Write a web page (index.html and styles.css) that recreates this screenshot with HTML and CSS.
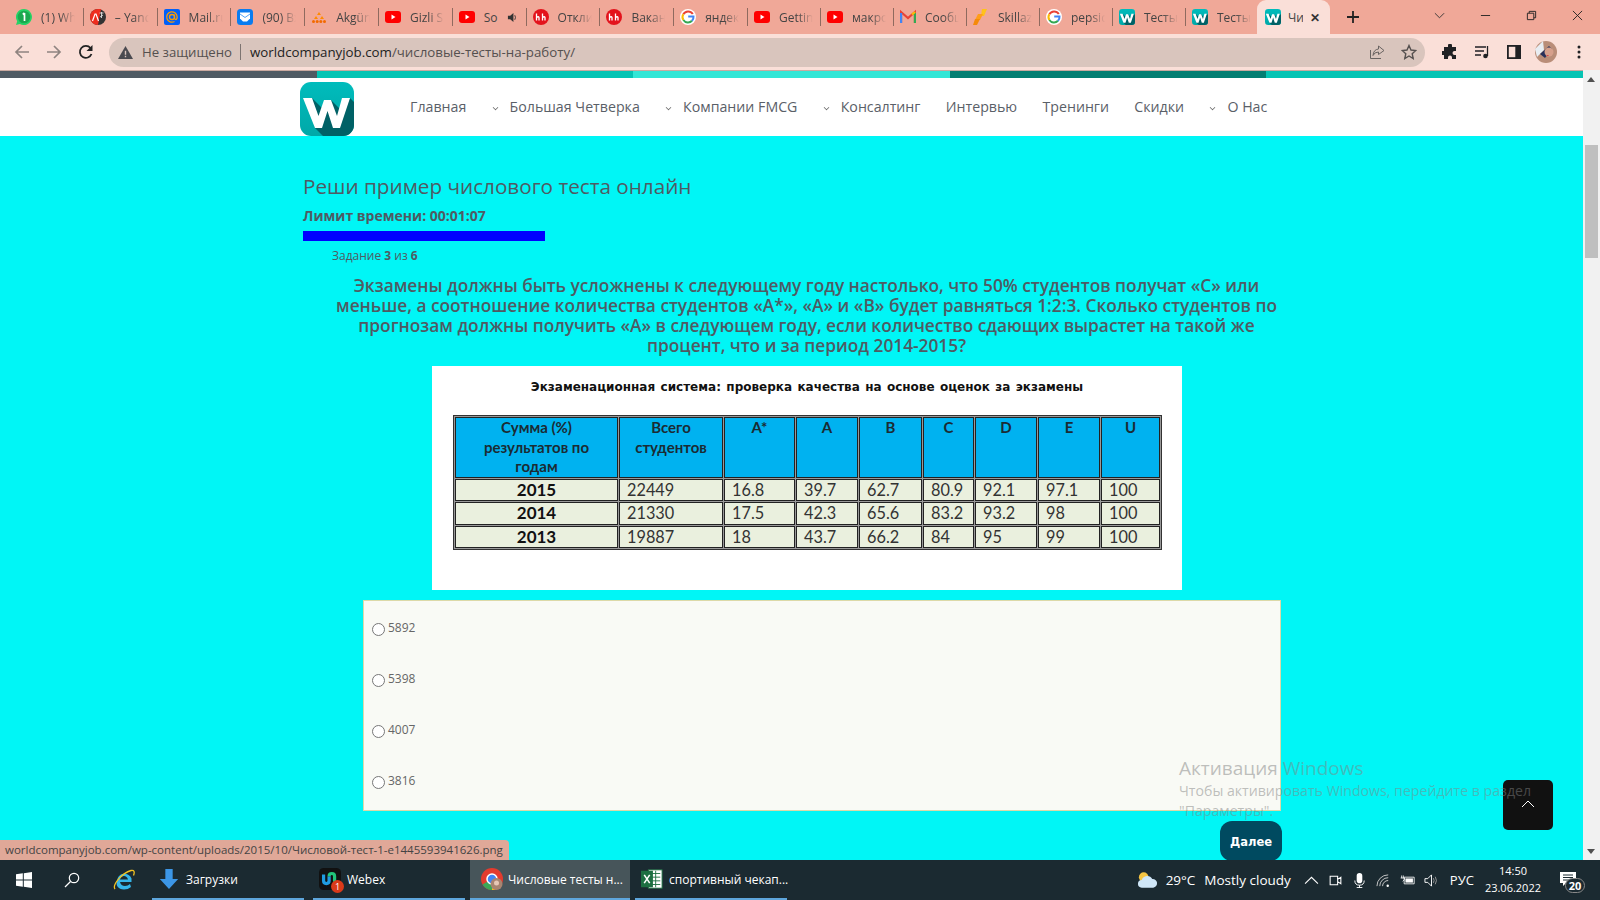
FILE: index.html
```html
<!DOCTYPE html>
<html lang="ru">
<head>
<meta charset="utf-8">
<title>Числовые тесты на работу</title>
<link rel="stylesheet" href="styles.css">
</head>
<body>
<svg class="defs" width="0" height="0" aria-hidden="true">
  <defs>
    <linearGradient id="wg" x1="0" y1="0" x2="0" y2="1"><stop offset="0" stop-color="#00bcbc"/><stop offset="1" stop-color="#00a8a8"/></linearGradient>
    <symbol id="i-w" viewBox="0 0 54 54"><rect width="54" height="54" rx="11" fill="url(#wg)"/><path d="M12 16 24 28 31 18 43 30 50 16 54 20V43A11 11 0 0 1 43 54H23L15 46Z" fill="#006166"/><path d="M3 16h9l6.500 18L24 18h7l6 16 5-18h8L40 46h-7l-5.500-17L22 46h-7z" fill="#fff"/></symbol>
    <symbol id="i-yt" viewBox="0 0 16 16"><rect y="2" width="16" height="12" rx="3" fill="#f00"/><path d="M6.500 5.500v5l4-2.500z" fill="#fff"/></symbol>
    <symbol id="i-hh" viewBox="0 0 16 16"><circle cx="8" cy="8" r="8" fill="#e3131c"/><path d="M3.500 4.500v7M3.500 8.500q2-1.500 2.500 0v3M9.500 4.500v7M9.500 8.500q2-1.500 2.500 0v3" fill="none" stroke="#fff" stroke-width="1.300"/></symbol>
    <symbol id="i-g" viewBox="0 0 16 16"><circle cx="8" cy="8" r="8" fill="#fff"/><path d="M12.800 5A5.500 5.500 0 0 0 3.300 5.300" fill="none" stroke="#ea4335" stroke-width="2"/><path d="M3.300 5.200A5.500 5.500 0 0 0 3.400 11" fill="none" stroke="#fbbc05" stroke-width="2"/><path d="M3.400 11A5.500 5.500 0 0 0 12 11.800" fill="none" stroke="#34a853" stroke-width="2"/><path d="M12 11.800A5.500 5.500 0 0 0 13.500 7.500H8.200" fill="none" stroke="#4285f4" stroke-width="2"/></symbol>
    <symbol id="i-wa" viewBox="0 0 16 16"><path d="M8 0a8 8 0 0 0-6.800 12.200L0 16l3.900-1.100A8 8 0 1 0 8 0z" fill="#25d366"/><circle cx="8" cy="8" r="6.300" fill="#1ca84f"/><path d="M8.500 4v8M6.800 5.500 8.500 4" stroke="#fff" stroke-width="1.700" fill="none"/></symbol>
    <symbol id="i-tr" viewBox="0 0 16 16"><circle cx="8" cy="8" r="8" fill="#333"/><path d="M8 0A8 8 0 0 0 8 16L11 0z" fill="#ef2d1e"/><path d="M2.500 12 5 5h1l2.500 7" fill="none" stroke="#fff" stroke-width="1.200"/><path d="M9.500 4h4M11.500 3v6M10 8l3-2" stroke="#ddd" stroke-width=".9" fill="none"/></symbol>
    <symbol id="i-mail" viewBox="0 0 16 16"><rect width="16" height="16" rx="2" fill="#005ff9"/><circle cx="8" cy="8" r="2.500" fill="none" stroke="#ff9e00" stroke-width="1.300"/><path d="M10.500 5.500v3.500q0 1.500 1.300 1.500t1.300-2.500A5.200 5.200 0 1 0 10.500 12.500" fill="none" stroke="#ff9e00" stroke-width="1.300"/></symbol>
    <symbol id="i-msg" viewBox="0 0 16 16"><rect width="16" height="16" rx="3.500" fill="#0a7cf0"/><path d="M3 3.500h10v6l-3 3H6l-3-3z" fill="#fff"/><path d="M3 5l5 3.500L13 5" fill="none" stroke="#0a7cf0" stroke-width=".7"/></symbol>
    <symbol id="i-ak" viewBox="0 0 16 16"><path d="M8 3l2 3H6zM5 7l2 3H3zM11 7l2 3H9z" fill="#ff8a00"/><circle cx="2.500" cy="12.500" r="1.500" fill="#f26a00"/><circle cx="6.200" cy="12.500" r="1.500" fill="#f26a00"/><circle cx="9.800" cy="12.500" r="1.500" fill="#f26a00"/><circle cx="13.500" cy="12.500" r="1.500" fill="#f26a00"/></symbol>
    <symbol id="i-gm" viewBox="0 0 16 16"><path d="M1 14V3l7 6 7-6v11" fill="none" stroke="#ea4335" stroke-width="2.200"/><path d="M1 14V4" stroke="#4285f4" stroke-width="2.400"/><path d="M15 14V4" stroke="#34a853" stroke-width="2.400"/><path d="M12 5.500 15 3" stroke="#fbbc05" stroke-width="2.200"/></symbol>
    <symbol id="i-sk" viewBox="0 0 16 16"><path d="M9 0h5l-3 7H8z" fill="#ffc21a"/><path d="M5 5h5l-3 6H2z" fill="#ff9d1a"/><path d="M2 10h5l-3 6H0z" fill="#f58a0a"/></symbol>
  </defs>
</svg>

<div class="screen">
  <div class="tabbar">
    <div class="tab"><svg class="tab-ico"><use href="#i-wa"/></svg><span class="tab-t">(1) WhatsApp</span></div>
    <div class="tab"><svg class="tab-ico"><use href="#i-tr"/></svg><span class="tab-t">– Yandex</span></div>
    <div class="tab"><svg class="tab-ico"><use href="#i-mail"/></svg><span class="tab-t">Mail.ru</span></div>
    <div class="tab"><svg class="tab-ico"><use href="#i-msg"/></svg><span class="tab-t">(90) Входящие</span></div>
    <div class="tab"><svg class="tab-ico"><use href="#i-ak"/></svg><span class="tab-t">Akgün</span></div>
    <div class="tab"><svg class="tab-ico"><use href="#i-yt"/></svg><span class="tab-t">Gizli Sır</span></div>
    <div class="tab"><svg class="tab-ico"><use href="#i-yt"/></svg><span class="tab-t tab-short">So</span><svg class="tab-snd" viewBox="0 0 12 12"><path d="M1 4h2.500L7 1v10L3.500 8H1z" fill="#333"/><path d="M8.500 3.500q1.500 2.500 0 5" fill="none" stroke="#333"/></svg></div>
    <div class="tab"><svg class="tab-ico"><use href="#i-hh"/></svg><span class="tab-t">Отклики</span></div>
    <div class="tab"><svg class="tab-ico"><use href="#i-hh"/></svg><span class="tab-t">Вакансии</span></div>
    <div class="tab"><svg class="tab-ico"><use href="#i-g"/></svg><span class="tab-t">яндекс</span></div>
    <div class="tab"><svg class="tab-ico"><use href="#i-yt"/></svg><span class="tab-t">Getting</span></div>
    <div class="tab"><svg class="tab-ico"><use href="#i-yt"/></svg><span class="tab-t">макрос</span></div>
    <div class="tab"><svg class="tab-ico"><use href="#i-gm"/></svg><span class="tab-t">Сообщения</span></div>
    <div class="tab"><svg class="tab-ico"><use href="#i-sk"/></svg><span class="tab-t">Skillaz</span></div>
    <div class="tab"><svg class="tab-ico"><use href="#i-g"/></svg><span class="tab-t">pepsico</span></div>
    <div class="tab"><svg class="tab-ico"><use href="#i-w"/></svg><span class="tab-t">Тесты</span></div>
    <div class="tab"><svg class="tab-ico"><use href="#i-w"/></svg><span class="tab-t">Тесты</span></div>
    <div class="tab tab-active"><svg class="tab-ico"><use href="#i-w"/></svg><span class="tab-t tab-short">Чи</span><span class="tab-x">✕</span></div>
    <svg class="newtab" viewBox="0 0 14 14"><path d="M7 1v12M1 7h12" stroke="#222" stroke-width="1.800"/></svg>
    <div class="winbtns">
      <svg class="win" viewBox="0 0 12 12"><path d="M1 3.500 6 8.500l5-5" fill="none" stroke="#333"/></svg>
      <svg class="win" viewBox="0 0 12 12"><path d="M1 6h10" stroke="#222"/></svg>
      <svg class="win" viewBox="0 0 12 12"><path d="M1.500 3.500h7v7h-7zM3.500 3.500v-2h7v7h-2" fill="none" stroke="#222"/></svg>
      <svg class="win" viewBox="0 0 12 12"><path d="M1 1l10 10M11 1 1 11" stroke="#222"/></svg>
    </div>
  </div>

  <div class="toolbar">
    <svg class="tb-ico nav-first" viewBox="0 0 16 16"><path d="M15 8H2M8 2 2 8l6 6" fill="none" stroke="#8f8480" stroke-width="1.700"/></svg>
    <svg class="tb-ico" viewBox="0 0 16 16"><path d="M1 8h13M8 2l6 6-6 6" fill="none" stroke="#8f8480" stroke-width="1.700"/></svg>
    <svg class="tb-ico" viewBox="0 0 16 16"><path d="M13.500 10A6 6 0 1 1 12.500 4" fill="none" stroke="#222" stroke-width="1.800"/><path d="M14.500 1v6h-6z" fill="#222"/></svg>
    <div class="omnibox">
      <svg class="warn" viewBox="0 0 16 16"><path d="M8 1 16 15H0z" fill="#4a4a50"/><path d="M8 6v4.500M8 11.500v1.500" stroke="#d9c5bd" stroke-width="1.500"/></svg>
      <span class="insecure">Не защищено</span>
      <span class="omni-sep"></span>
      <span class="url">worldcompanyjob.com<span class="url-path">/числовые-тесты-на-работу/</span></span>
      <svg class="omni-ico omni-share" viewBox="0 0 16 16"><path d="M9.500 2 15 6.500 9.500 10.500V8Q5.500 8 4 11.500 4.500 5.500 9.500 5z" fill="none" stroke="#6a6462"/><path d="M1.500 6v8.500H12" fill="none" stroke="#6a6462"/></svg>
      <svg class="omni-ico omni-star" viewBox="0 0 16 16"><path d="M8 1.500l2 4.500 4.800.5-3.600 3.200 1 4.800L8 12l-4.200 2.500 1-4.800L1.200 6.500 6 6z" fill="none" stroke="#55504f" stroke-width="1.400"/></svg>
    </div>
    <svg class="tb-ico ext" viewBox="0 0 16 16"><path d="M6 1.500a2 2 0 0 1 4 0V3h4v4h-1.500a2 2 0 0 0 0 4H14v4h-4v-1.500a2 2 0 0 0-4 0V15H2v-4H.8a2 2 0 0 1 0-4H2V3h4z" fill="#202124"/></svg>
    <svg class="tb-ico ext" viewBox="0 0 16 16"><path d="M1 3h11M1 7h9M1 11h6" stroke="#202124" stroke-width="1.300"/><path d="M13.500 2v10" stroke="#202124" stroke-width="1.300"/><circle cx="11.500" cy="12" r="2.300" fill="#202124"/></svg>
    <svg class="tb-ico ext" viewBox="0 0 16 16"><path d="M1 1h14v14H1z" fill="#202124"/><path d="M2.800 2.800h6.500v10.400H2.800z" fill="#fadfd8"/></svg>
    <svg class="tb-ico ext" viewBox="0 0 22 22"><circle cx="11" cy="11" r="11" fill="#b98d78"/><path d="M0 8 8 0 9 9 2 16z" fill="#e8edf2"/><path d="M5 13 14 5l3 3-7 9z" fill="#27305a"/><circle cx="14" cy="11" r="4.500" fill="#d6a08c"/><path d="M11 15q2-1.500 3 0z" fill="#d21f2c"/></svg>
    <svg class="tb-ico ext" viewBox="0 0 16 16"><circle cx="8" cy="3" r="1.500" fill="#202124"/><circle cx="8" cy="8" r="1.500" fill="#202124"/><circle cx="8" cy="13" r="1.500" fill="#202124"/></svg>
  </div>

  <div class="viewport">
    <div class="page">
      <div class="strip"><span class="s1"></span><span class="s2"></span><span class="s3"></span><span class="s4"></span><span class="s2"></span></div>
      <header class="site-head">
        <svg class="logo"><use href="#i-w"/></svg>
        <nav class="menu">
          <a>Главная</a>
          <a class="has-sub">Большая Четверка</a>
          <a class="has-sub">Компании FMCG</a>
          <a class="has-sub">Консалтинг</a>
          <a>Интервью</a>
          <a>Тренинги</a>
          <a>Скидки</a>
          <a class="has-sub">О Нас</a>
        </nav>
      </header>
      <main class="content">
        <h1 class="title">Реши пример числового теста онлайн</h1>
        <p class="timer">Лимит времени: 00:01:07</p>
        <div class="bar"></div>
        <p class="counter">Задание <b>3</b> из <b>6</b></p>
        <p class="question">Экзамены должны быть усложнены к следующему году настолько, что 50% студентов получат «С» или меньше, а соотношение количества студентов «А*», «А» и «В» будет равняться 1:2:3. Сколько студентов по прогнозам должны получить «А» в следующем году, если количество сдающих вырастет на такой же процент, что и за период 2014-2015?</p>
        <figure class="figure">
          <figcaption class="fig-title">Экзаменационная система: проверка качества на основе оценок за экзамены</figcaption>
          <table class="exam">
            <colgroup><col class="c1"><col class="c2"><col class="c3"><col class="c4"><col class="c5"><col class="c6"><col class="c7"><col class="c8"><col class="c9"></colgroup>
            <thead><tr><th>Сумма (%) результатов по годам</th><th>Всего студентов</th><th>А*</th><th>А</th><th>В</th><th>С</th><th>D</th><th>Е</th><th>U</th></tr></thead>
            <tbody>
              <tr><td class="yr">2015</td><td>22449</td><td>16.8</td><td>39.7</td><td>62.7</td><td>80.9</td><td>92.1</td><td>97.1</td><td>100</td></tr>
              <tr><td class="yr">2014</td><td>21330</td><td>17.5</td><td>42.3</td><td>65.6</td><td>83.2</td><td>93.2</td><td>98</td><td>100</td></tr>
              <tr><td class="yr">2013</td><td>19887</td><td>18</td><td>43.7</td><td>66.2</td><td>84</td><td>95</td><td>99</td><td>100</td></tr>
            </tbody>
          </table>
        </figure>
        <form class="answers">
          <label class="answer"><input type="radio" name="a"><span>5892</span></label>
          <label class="answer"><input type="radio" name="a"><span>5398</span></label>
          <label class="answer"><input type="radio" name="a"><span>4007</span></label>
          <label class="answer"><input type="radio" name="a"><span>3816</span></label>
        </form>
        <button class="next" type="button">Далее</button>
      </main>
    </div>
    <div class="scrollbar">
      <svg class="sb-arrow" viewBox="0 0 8 5"><path d="M4 0 8 5H0z" fill="#505050"/></svg>
      <div class="sb-thumb"></div>
      <svg class="sb-arrow sb-down" viewBox="0 0 8 5"><path d="M0 0h8L4 5z" fill="#505050"/></svg>
    </div>
    <a class="to-top"><svg viewBox="0 0 14 8"><path d="M1 7l6-6 6 6" fill="none" stroke="#fff"/></svg></a>
    <div class="activation">
      <div class="act-1">Активация Windows</div>
      <div class="act-2">Чтобы активировать Windows, перейдите в раздел "Параметры".</div>
    </div>
    <div class="status">worldcompanyjob.com/wp-content/uploads/2015/10/Числовой-тест-1-е1445593941626.png</div>
  </div>

  <div class="taskbar">
    <svg class="tk-win" viewBox="0 0 16 16"><path d="M0 2.300 6.800 1.300V7.500H0zM7.800 1.200 16 0V7.500H7.800zM0 8.500H6.800V14.700L0 13.700zM7.800 8.500H16V16L7.800 14.800z" fill="#fff"/></svg>
    <svg class="tk-search" viewBox="0 0 16 16"><circle cx="10" cy="6" r="4.700" fill="none" stroke="#fff" stroke-width="1.200"/><path d="M6.500 9.500 1 15" stroke="#fff" stroke-width="1.300"/></svg>
    <svg class="tk-ie" viewBox="0 0 24 24"><path d="M5 13a7.500 7.500 0 0 1 14.500-2.500V14H8q1 4 5 4 3 0 5-2l1 3q-3 2.500-7 2.500C6 21.500 3.500 17 5 13z" fill="#35b6ea"/><path d="M8 11.500h8q-1-3.500-4-3.500t-4 3.500z" fill="#1b2a31"/><path d="M3 21C0 17 10 5 19 2.500c3-.8 4 1 2.500 5" fill="none" stroke="#f3c321" stroke-width="1.300"/></svg>
    <div class="task task-first"><svg class="tk-app" viewBox="0 0 20 24"><path d="M6 1h8v11h6L10 23 0 12h6z" fill="#3c96e6"/></svg><span>Загрузки</span></div>
    <div class="task"><span class="webex"><svg class="tk-app" viewBox="0 0 24 24"><rect width="24" height="24" rx="5" fill="#111"/><path d="M5 7v7q0 3 3 3t3-3V9" fill="none" stroke="#1f9be0" stroke-width="3.500"/><path d="M11 9q0-3 3-3t3 3v6" fill="none" stroke="#21c47a" stroke-width="3.500"/></svg><span class="badge">1</span></span><span>Webex</span></div>
    <div class="task task-active"><span class="webex"><svg class="tk-app" viewBox="0 0 22 22"><circle cx="11" cy="11" r="11" fill="#e33b2e"/><path d="M11 11 1.500 16.500A11 11 0 0 0 11 22z" fill="#3aa757"/><path d="M11 11 20.500 16.500A11 11 0 0 1 11 22z" fill="#fbc116"/><circle cx="11" cy="11" r="5" fill="#4285f4" stroke="#fff" stroke-width="1.500"/><circle cx="15.500" cy="16" r="6" fill="#a98470"/><circle cx="15.500" cy="15" r="2.500" fill="#e6c7b5"/></svg></span><span>Числовые тесты н...</span></div>
    <div class="task"><svg class="tk-app" viewBox="0 0 24 24"><rect x="8" y="2" width="15" height="20" fill="#fff" stroke="#1d6f42"/><path d="M12 6h9M12 10h9M12 14h9M12 18h9M16 3v18" stroke="#1d6f42"/><rect y="3" width="13" height="18" fill="#1d6f42"/><path d="M3.500 7.500l6 9M9.500 7.500l-6 9" stroke="#fff" stroke-width="1.700"/></svg><span>спортивный чекап...</span></div>
    <div class="tray">
      <svg class="weather" viewBox="0 0 22 18"><circle cx="7" cy="6" r="5" fill="#f5c542"/><path d="M5 17a4 4 0 0 1 0-8 6 6 0 0 1 11-1 4.500 4.500 0 0 1 1 9z" fill="#cfe6f7"/></svg>
      <span class="temp">29°C</span>
      <span class="cond">Mostly cloudy</span>
      <svg class="tr-ico tr-chev" viewBox="0 0 14 14"><path d="M1 10l6-6 6 6" fill="none" stroke="#fff"/></svg>
      <svg class="tr-ico" viewBox="0 0 14 14"><path d="M2 3h7v8H2zM9 6l3-2v6l-3-2" fill="none" stroke="#fff"/></svg>
      <svg class="tr-ico" viewBox="0 0 14 16"><rect x="4" width="6" height="11" rx="3" fill="#fff"/><path d="M2 8q0 5 5 5t5-5M7 13v3M4 15.500h6" fill="none" stroke="#fff"/></svg>
      <svg class="tr-ico" viewBox="0 0 16 14"><path d="M1 13A12 12 0 0 1 13 1M4 13A9 9 0 0 1 13 4M7 13a6 6 0 0 1 6-6" fill="none" stroke="#ccc"/><circle cx="12.500" cy="12.500" r="1.300" fill="#fff"/></svg>
      <svg class="tr-ico" viewBox="0 0 18 14"><path d="M5 3h12v8H5z" fill="none" stroke="#fff"/><path d="M6.500 4.500h9v5h-9z" fill="#fff"/><path d="M2 1v3M4 1v3M.8 4h4.500v2l-2 2" fill="none" stroke="#fff"/></svg>
      <svg class="tr-ico" viewBox="0 0 16 14"><path d="M1 5h3l4-4v12L4 9H1z" fill="none" stroke="#fff"/><path d="M10 4.500q1.500 2.500 0 5M12 3q2.500 4 0 8" fill="none" stroke="#999"/></svg>
      <span class="lang">РУС</span>
      <span class="clock"><span>14:50</span><span>23.06.2022</span></span>
      <span class="notif"><svg viewBox="0 0 16 14"><path d="M0 0h16v11H6l-3 3v-3H0z" fill="#fff"/><path d="M3 3h10M3 5.500h10M3 8h7" stroke="#1b2a31"/></svg><span class="notif-n">20</span></span>
    </div>
  </div>
</div>
</body>
</html>
```

FILE: styles.css
```css
* { box-sizing: border-box; }
html, body { margin: 0; padding: 0; height: 100%; overflow: hidden; }
body { font-family: "Open Sans", "Noto Sans", sans-serif; }
.defs { position: absolute; }
.screen { width: 1600px; height: 900px; display: flex; flex-direction: column; overflow: hidden; }

/* tabs */
.tabbar { height: 34px; background: #f0a898; display: flex; align-items: stretch; padding-left: 10px; flex: none; }
.tab { width: 73.800px; height: 34px; display: flex; align-items: center; padding-left: 6px; gap: 9px; position: relative; flex: none; }
.tab:nth-child(n+11) { width: 73px; }
.tab::after { content: ""; position: absolute; right: 0; top: 8px; height: 18px; width: 1px; background: #8f6a5f; }
.tab-ico { width: 16px; height: 16px; flex: none; }
.tab-t { font-size: 12px; color: #444; white-space: nowrap; overflow: hidden; width: 34px; flex: none; -webkit-mask-image: linear-gradient(90deg, #000 55%, transparent 100%); mask-image: linear-gradient(90deg, #000 55%, transparent 100%); }
.tab-t.tab-short { width: 15px; -webkit-mask-image: none; mask-image: none; }
.tab-snd { width: 11px; height: 11px; margin-left: -1px; }
.tab-active { background: #fadfd8; border-radius: 9px 9px 0 0; margin-left: -2px; padding-left: 8px; gap: 7px; }
.tab-active::after { display: none; }
.tab-x { font-size: 12px; font-weight: 700; color: #333; }
.newtab { width: 14px; height: 14px; margin: 10px 0 0 16px; flex: none; }
.winbtns { margin-left: auto; display: flex; align-items: center; height: 30px; }
.win { width: 11px; height: 11px; margin-right: 35px; }
.win:last-child { margin-right: 17px; }

/* toolbar */
.toolbar { height: 36px; background: #fadfd8; display: flex; align-items: center; flex: none; }
.tb-ico { width: 16px; height: 16px; margin-left: 16px; flex: none; }
.nav-first { margin-left: 14px; }
.omnibox { width: 1316px; height: 29px; margin-left: 15px; background: #d9c5bd; border-radius: 15px; display: flex; align-items: center; padding-left: 9px; }
.warn { width: 15px; height: 15px; flex: none; }
.insecure { font-size: 13.200px; color: #55504f; margin-left: 9px; }
.omni-sep { width: 1px; height: 16px; background: #7d7471; margin: 0 9px 0 8px; }
.url { font-size: 13.300px; color: #222; white-space: nowrap; }
.url-path { color: #55504f; }
.omni-ico { width: 16px; height: 16px; flex: none; margin-left: 16px; }
.omni-share { margin-left: auto; }
.omni-star { margin-right: 8px; }
.ext { margin-left: 16px; }
.omnibox + .ext { margin-left: 17px; }
.toolbar .ext:nth-last-child(2) { width: 22px; height: 22px; margin-left: 13px; }
.toolbar .ext:last-child { margin-left: 14px; }

/* viewport */
.viewport { flex: 1; display: flex; position: relative; overflow: hidden; min-height: 0; }
.page { flex: 1; background: #00f6f6; overflow: hidden; border-top: 1px solid #c9a9a0; min-width: 0; }
.strip { display: flex; height: 7px; }
.strip span { flex: 1; }
.s1 { background: #4f5a63; }
.s2 { background: #06c4b4; }
.s3 { background: #33e6d6; }
.s4 { background: #047e72; }
.site-head { background: #fff; height: 58px; display: flex; padding: 4px 0 0 300px; }
.logo { width: 54px; height: 54px; flex: none; }
.menu { display: flex; align-items: flex-start; margin-left: 56px; padding-top: 15px; font-size: 14.200px; color: #5a6068; white-space: nowrap; gap: 25.300px; }
.has-sub { position: relative; margin-left: 18px; }
.has-sub::before { content: ""; position: absolute; left: -17px; top: 8px; width: 4px; height: 4px; border-right: 1px solid #666; border-bottom: 1px solid #666; transform: rotate(45deg) scale(.8); }

.content { padding: 0 0 0 302px; color: #4f5a63; }
.title { font-size: 20.700px; font-weight: 400; line-height: 28px; margin: 0 0 0 1px; padding-top: 36px; }
.timer { font-size: 14px; font-weight: 700; line-height: 20px; margin: 6px 0 0 1px; }
.bar { width: 242px; height: 10px; background: #0000ff; margin: 5px 0 0 1px; }
.counter { font-size: 12px; line-height: 16px; margin: 7px 0 0 30px; }
.question { width: 945px; margin: 12px 0 0 32px; font-size: 17.300px; font-weight: 600; line-height: 20px; text-align: center; }
.figure { width: 750px; height: 224px; margin: 10px 0 0 130px; background: #fff; padding: 13px 0 0 21px; }
.fig-title { width: 708px; font-family: "DejaVu Sans", sans-serif; font-size: 12px; font-weight: 700; color: #111; text-align: center; line-height: 16px; white-space: nowrap; word-spacing: 1.200px; }
.exam { width: 709px; margin-top: 20px; table-layout: fixed; border-collapse: separate; border-spacing: 1px; border: 1px solid #333; background: #999; font-family: Lato, sans-serif; color: #222; }
.exam th, .exam td { border: 1px solid #222; padding: 0; }
.exam th { height: 59px; background: #00b2f0; font-size: 15px; font-weight: 700; line-height: 19.500px; vertical-align: top; text-align: center; padding: 0 14px; color: #1b2b33; }
.exam td { height: 22.500px; background: #eaf0de; font-size: 16.300px; line-height: 20px; padding-left: 7px; color: #333; }
.exam .yr { text-align: center; font-size: 17px; font-weight: 700; color: #111; padding-left: 0; }
.c1 { width: 163px; } .c2 { width: 104px; } .c3 { width: 71px; } .c4 { width: 62px; } .c5 { width: 63px; }
.c6 { width: 51px; } .c7 { width: 62px; } .c8 { width: 62px; } .c9 { width: 59px; }
.answers { width: 918px; height: 211px; margin: 10px 0 0 61px; background: #f9faf5; border: 1px solid #dcd9a8; padding-top: 1px; }
.answer { display: flex; align-items: center; height: 51px; padding-left: 8px; font-size: 12px; color: #666; }
.answer input { width: 13px; height: 13px; margin: 3px 3px 0 0; }
.answer span { margin-top: -1px; }
.next { display: block; width: 62px; height: 40px; margin: 10px 0 0 918px; border: 0; border-radius: 12px; background: #004a60; color: #fff; font-family: "DejaVu Sans", sans-serif; font-weight: 700; font-size: 11.500px; padding: 1px 0 0; }

/* scrollbar */
.scrollbar { width: 17px; background: #f1f1f1; position: relative; flex: none; }
.sb-arrow { position: absolute; left: 4px; top: 7px; width: 8px; height: 5px; display: block; }
.sb-down { top: auto; bottom: 6px; }
.sb-thumb { position: absolute; left: 2px; top: 75px; width: 13px; height: 113px; background: #bfbfbf; }

/* overlays */
.to-top { position: absolute; left: 1503px; top: 710px; width: 50px; height: 50px; border-radius: 5px; background: #111; display: flex; justify-content: center; padding-top: 20px; }
.to-top svg { width: 14px; height: 8px; }
.activation { position: absolute; left: 1179px; top: 685px; width: 370px; color: rgba(130,130,130,.5); }
.act-1 { font-size: 19px; line-height: 26px; }
.act-2 { font-size: 14.150px; line-height: 20px; }
.status { position: absolute; left: 0; bottom: 0; height: 20px; padding: 0 6px 0 5px; background: #e0a898; border-radius: 0 4px 0 0; font-size: 11.500px; line-height: 20px; color: #444; white-space: nowrap; }

/* taskbar */
.taskbar { height: 40px; background: #1b2a31; display: flex; align-items: center; color: #fff; flex: none; font-size: 12px; }
.tk-win { width: 16px; height: 16px; margin-left: 16px; flex: none; }
.tk-search { width: 16px; height: 16px; margin-left: 32px; flex: none; }
.tk-ie { width: 24px; height: 24px; margin-left: 32px; flex: none; }
.task { width: 152px; height: 40px; display: flex; align-items: center; gap: 6px; padding-left: 6px; border-bottom: 2px solid #5ea6dc; margin-left: 9px; flex: none; white-space: nowrap; }
.task-first { margin-left: 16px; }
.task-active { width: 160px; margin-left: 5px; background: #47555a; padding-left: 11px; gap: 5px; }
.task-active + .task { margin-left: 5px; }
.tk-app { width: 22px; height: 22px; flex: none; display: block; }
.webex { position: relative; display: block; flex: none; }
.badge { position: absolute; right: -3px; bottom: -3px; width: 13px; height: 13px; border-radius: 50%; background: #d93a1a; color: #fff; font-size: 9px; line-height: 13px; text-align: center; }
.tray { margin-left: auto; display: flex; align-items: center; height: 40px; }
.weather { width: 21px; height: 18px; flex: none; }
.temp { font-size: 13.500px; margin-left: 8px; }
.cond { font-size: 13.500px; margin-left: 9px; }
.tr-ico { width: 15px; height: 15px; margin-left: 9px; flex: none; }
.tr-chev { margin-left: 13px; }
.lang { font-size: 13px; margin-left: 11px; }
.clock { display: flex; flex-direction: column; align-items: center; font-size: 11px; line-height: 17px; margin-left: 11px; padding-bottom: 2px; }
.notif { position: relative; width: 20px; height: 18px; margin: 0 20px 0 19px; display: block; }
.notif svg { width: 16px; height: 14px; position: absolute; left: 0; top: 1px; }
.notif-n { position: absolute; left: 5px; top: 7px; width: 20px; height: 15px; border: 1px solid #888; border-radius: 8px; background: #1b2a31; font-size: 11px; font-weight: 700; line-height: 13px; text-align: center; }
```
